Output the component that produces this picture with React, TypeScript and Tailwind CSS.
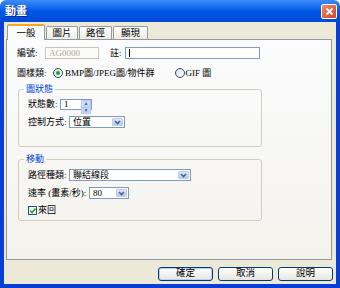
import React from "react";

const font = "font-['Liberation_Serif','Noto_Sans_CJK_TC',serif]";

function Chevron() {
  return (
    <svg width="7" height="5" viewBox="0 0 7 5">
      <path d="M1 1 L3.5 3.5 L6 1" fill="none" stroke="#4d6185" strokeWidth="1.6" />
    </svg>
  );
}

function Select({ value, width }: { value: string; width: string }) {
  return (
    <div className={`flex h-[12px] shrink-0 items-stretch border border-[#7f9db9] bg-white ${width}`}>
      <span className="flex-1 truncate pl-[3px] leading-[10px]">{value}</span>
      <span className="m-px flex w-[11px] items-center justify-center rounded-[1px] border border-[#b9cbf3] bg-gradient-to-b from-[#dde7fd] to-[#b7cbf8]">
        <Chevron />
      </span>
    </div>
  );
}

function Radio({ checked }: { checked?: boolean }) {
  return (
    <span className="flex h-[10px] w-[10px] shrink-0 items-center justify-center rounded-full border border-[#1c5180] bg-gradient-to-br from-[#dcdcd6] to-white">
      {checked && <span className="h-[4px] w-[4px] rounded-full bg-[#21a121]" />}
    </span>
  );
}

function Label({ text, width }: { text: string; width: string }) {
  return <span className={`shrink-0 whitespace-nowrap ${width}`}>{text}</span>;
}

function Button({ label, isDefault }: { label: string; isDefault?: boolean }) {
  return (
    <button
      className={`flex h-[14px] w-[55px] items-center justify-center rounded-[3px] border border-[#003c74] bg-gradient-to-b from-white to-[#e6e5de] text-[9.5px] leading-none ${
        isDefault ? "shadow-[inset_0_0_0_1px_#b9cef8]" : ""
      }`}
    >
      {label}
    </button>
  );
}

export default function App() {
  const tabs = [
    { label: "一般", w: "w-[38px]", active: true },
    { label: "圖片", w: "w-[32px]" },
    { label: "路徑", w: "w-[33px]" },
    { label: "顯現", w: "w-[35px]" },
  ];

  return (
    <div className={`flex h-[288px] w-[340px] flex-col ${font} text-black`}>
      {/* title bar */}
      <div className="flex h-[22px] items-center justify-between rounded-t-[6px] bg-gradient-to-b from-[#3b8cf7] via-[#0058e6] to-[#0049d6] pl-[5px] pr-[3px]">
        <span className="text-[11px] font-bold text-white [text-shadow:1px_1px_0_#0a1e8c]">動畫</span>
        <span className="flex h-[15px] w-[16px] items-center justify-center rounded-[2px] border border-white bg-gradient-to-br from-[#f08a6a] to-[#d2401c]">
          <svg width="9" height="9" viewBox="0 0 9 9">
            <path d="M1.5 1.5 L7.5 7.5 M7.5 1.5 L1.5 7.5" stroke="white" strokeWidth="1.8" />
          </svg>
        </span>
      </div>

      {/* body */}
      <div className="flex flex-1 flex-col border-x-4 border-b-4 border-[#0a3fd6] bg-[#ece9d8] pt-[2px]">
        <div className="ml-[3px] flex h-[15px] items-end">
          {tabs.map((t, i) =>
            t.active ? (
              <div
                key={i}
                className={`relative top-[1px] z-10 flex h-[16px] ${t.w} items-center justify-center rounded-t-[2px] border-x border-[#919b9c] border-t-2 border-t-[#f5a623] bg-[#fcfcfe] text-[9.5px]`}
              >
                {t.label}
              </div>
            ) : (
              <div
                key={i}
                className={`ml-px flex h-[13px] ${t.w} items-center justify-center rounded-t-[2px] border-x border-t border-[#919b9c] bg-gradient-to-b from-white to-[#ecebe6] text-[9.5px]`}
              >
                {t.label}
              </div>
            ),
          )}
        </div>

        {/* tab panel */}
        <div className="ml-[2px] flex h-[221px] w-[326px] flex-col border border-[#919b9c] bg-gradient-to-b from-[#fcfcfe] to-[#f3f2ec] pl-[10px] text-[9px] leading-none">
          <div className="mt-[7px] flex h-[12px] items-center">
            <Label text="編號:" width="w-[28px]" />
            <span className="flex h-[12px] w-[54px] items-center border border-[#c9c7ba] bg-[#fbfbf8] pl-[3px] text-[#aca899]">AG0000</span>
            <Label text="註:" width="ml-[11px] w-[15px]" />
            <span className="flex h-[12px] w-[135px] items-center border border-[#7f9db9] bg-white pl-[3px]">
              <span className="h-[8px] w-px bg-black" />
            </span>
          </div>

          <div className="mt-[8px] flex h-[12px] items-center">
            <Label text="圖樣類:" width="w-[36px]" />
            <Radio checked />
            <span className="ml-[2px] whitespace-nowrap">BMP圖/JPEG圖/物件群</span>
            <span className="ml-[20px]">
              <Radio />
            </span>
            <span className="ml-[1px] whitespace-nowrap">GIF 圖</span>
          </div>

          <fieldset className="ml-px mt-[4px] w-[244px] rounded-[3px] border border-[#d0d0bf] pb-[18px] pl-[9px]">
            <legend className="ml-[-4px] px-[2px] leading-[12px] text-[#0046d5]">圖狀態</legend>
            <div className="mt-[3px] flex h-[12px] items-center">
              <Label text="狀態數:" width="w-[32px]" />
              <div className="flex h-[11px] w-[32px] border border-[#7f9db9] bg-white">
                <span className="flex-1 pl-[3px] leading-[9px]">1</span>
                <span className="flex w-[10px] flex-col">
                  <span className="flex flex-1 items-center justify-center border border-[#b9cbf3] bg-[#cfdcfb] text-[5px] leading-none text-[#4d6185]">▲</span>
                  <span className="flex flex-1 items-center justify-center border border-[#b9cbf3] bg-[#c2d3fa] text-[5px] leading-none text-[#4d6185]">▼</span>
                </span>
              </div>
            </div>
            <div className="mt-[6px] flex h-[12px] items-center">
              <Label text="控制方式:" width="w-[41px]" />
              <Select value="位置" width="w-[56px]" />
            </div>
          </fieldset>

          <fieldset className="ml-px mt-[6px] w-[244px] rounded-[3px] border border-[#d0d0bf] pb-[5px] pl-[9px]">
            <legend className="ml-[-4px] px-[2px] leading-[12px] text-[#0046d5]">移動</legend>
            <div className="mt-[4px] flex h-[12px] items-center">
              <Label text="路徑種類:" width="w-[41px]" />
              <Select value="聯結線段" width="w-[122px]" />
            </div>
            <div className="mt-[6px] flex h-[12px] items-center">
              <Label text="速率 (畫素/秒):" width="w-[61px]" />
              <Select value="80" width="w-[40px]" />
            </div>
            <div className="mt-[6px] flex h-[10px] items-center">
              <span className="flex h-[9px] w-[9px] items-center justify-center border border-[#1c5180] bg-white">
                <svg width="7" height="7" viewBox="0 0 7 7">
                  <path d="M1 3.5 L3 5.5 L6.5 1.5" fill="none" stroke="#21a121" strokeWidth="1.6" />
                </svg>
              </span>
              <span className="ml-[1px]">來回</span>
            </div>
          </fieldset>
        </div>

        <div className="mt-[7px] flex justify-end gap-[5px] pr-[3px]">
          <Button label="確定" isDefault />
          <Button label="取消" />
          <Button label="說明" />
        </div>
      </div>
    </div>
  );
}
